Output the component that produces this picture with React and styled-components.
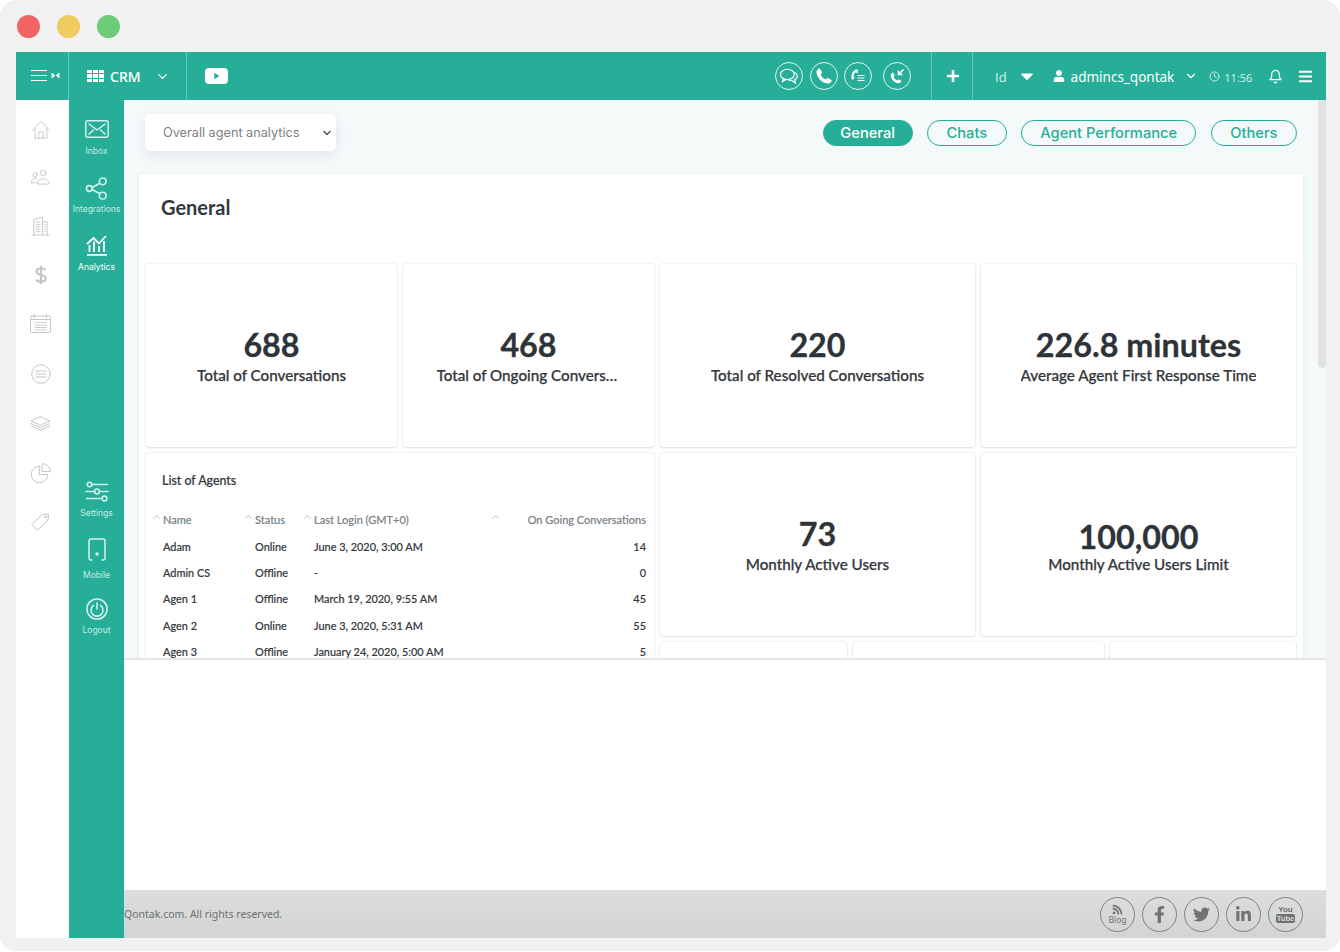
import styled, { createGlobalStyle } from 'styled-components';
import {
  FaRss,
  FaFacebookF,
  FaTwitter,
  FaLinkedinIn,
  FaUser,
  FaPlus,
  FaCaretDown,
  FaBars,
} from 'react-icons/fa';
import { FiChevronDown, FiBell, FiClock } from 'react-icons/fi';

const TEAL = '#27ae98';

const Global = createGlobalStyle`
  html, body { margin: 0; padding: 0; background: #fff; }
  * { box-sizing: border-box; }
  body { font-family: "Lato", "Liberation Sans", sans-serif; }
`;

const icon = { fill: 'none', stroke: 'currentColor', strokeLinecap: 'round', strokeLinejoin: 'round' };

const HomeIcon = () => (
  <svg width="20" height="20" viewBox="0 0 22 22" {...icon} strokeWidth="1">
    <path d="M1.500 11.500 11 1.500l9.500 10M4.500 9v11h13V9" />
    <path d="M8.500 20v-6a1 1 0 0 1 1-1h3a1 1 0 0 1 1 1v6" />
  </svg>
);
const PeopleIcon = () => (
  <svg width="21" height="16" viewBox="0 0 22 18" {...icon} strokeWidth="1">
    <circle cx="14" cy="4.500" r="3.300" />
    <path d="M7.500 16a6.500 5 0 0 1 13 0 1 1 0 0 1-1 1h-11a1 1 0 0 1-1-1Z" />
    <circle cx="5" cy="6.500" r="2.400" />
    <path d="M1 15.500c-.4-3.500 1.500-5.300 4-5.300 1 0 1.600.2 2.300.6M1 15.500h4" />
  </svg>
);
const BuildingIcon = () => (
  <svg width="19" height="20" viewBox="0 0 20 21" {...icon} strokeWidth="1">
    <path d="M3 20V4l9-3v19M12 6h5v14M1 20h18" />
    <path d="M5.500 6.500h4M5.500 9h4M5.500 11.500h4M5.500 14h4M5.500 16.500h4M14 9h1.500M14 11.500h1.500M14 14h1.500M14 16.500h1.500" strokeDasharray="1 .8" />
  </svg>
);
const DollarIcon = () => (
  <svg width="12" height="20" viewBox="0 0 13 22" {...icon} strokeWidth="2.400" strokeLinecap="butt">
    <path d="M6.500 1v20M11.500 5.500C10.500 4 8.800 3.800 6.500 3.800c-3 0-5 1.200-5 3.400 0 5 10.200 2.600 10.200 7.600 0 2.300-2.200 3.500-5.200 3.500-2.500 0-4.300-.5-5.300-2.200" />
  </svg>
);
const CalendarIcon = () => (
  <svg width="21" height="19" viewBox="0 0 21 19" {...icon} strokeWidth="1">
    <rect x=".5" y="2" width="20" height="16.500" rx="1.500" />
    <path d="M4.500 .5v3M16.500 .5v3M.5 5.500h20" />
    <path d="M5 8.500h11M5 11h11M5 13.500h11M5 16h11" strokeDasharray="1 1" />
  </svg>
);
const ListCircleIcon = () => (
  <svg width="20" height="20" viewBox="0 0 20 20" {...icon} strokeWidth="1">
    <circle cx="10" cy="10" r="9.300" />
    <path d="M5 7h10M5 10h10M5 13h10" />
  </svg>
);
const LayersIcon = () => (
  <svg width="21" height="15" viewBox="0 0 20 15" {...icon} strokeWidth="1">
    <path d="M10 .8 19.300 5 10 9.200 .7 5Z" />
    <path d="M.7 7.500 10 11.700l9.300-4.200M.7 10 10 14.200 19.300 10" />
  </svg>
);
const PieIcon = () => (
  <svg width="20" height="20" viewBox="0 0 20 20" {...icon} strokeWidth="1">
    <path d="M8.500 3.200a8.300 8.300 0 1 0 8.300 8.300H8.500Z" />
    <path d="M11.500 .7a7.800 7.800 0 0 1 7.800 7.800h-7.800Z" />
  </svg>
);
const TagIcon = () => (
  <svg width="19" height="18" viewBox="0 0 19 18" {...icon} strokeWidth="1">
    <path d="M1 11 11.500 1.500l6-.5-.5 6L6.800 17Z" />
    <circle cx="14.500" cy="4" r="1" />
  </svg>
);
const InboxIcon = () => (
  <svg width="24" height="18" viewBox="0 0 24 18" {...icon} strokeWidth="1.500">
    <rect x=".8" y=".8" width="22.400" height="16.400" rx="2" />
    <path d="M4 4l8 6 8-6M4 14l4.500-4M20 14l-4.500-4" />
  </svg>
);
const ShareIcon = () => (
  <svg width="23" height="23" viewBox="0 0 23 24" {...icon} strokeWidth="1.600">
    <circle cx="4" cy="12" r="3" />
    <circle cx="18" cy="4.500" r="3.500" />
    <circle cx="18" cy="19.500" r="3.500" />
    <path d="m7 11 8-4.500M7 13l8 4.500" />
  </svg>
);
const ChartIcon = () => (
  <svg width="22" height="21" viewBox="0 0 22 21" {...icon} strokeWidth="1.800" strokeLinecap="butt">
    <path d="M1 19.800h20M3.500 17V10M8 17V6.500M13 17v-6M18 17V6" />
    <path d="M1 9l6.500-6 5.500 5.500 7-7.500" />
  </svg>
);
const SlidersIcon = () => (
  <svg width="24" height="21" viewBox="0 0 24 20" {...icon} strokeWidth="1.500">
    <circle cx="4.500" cy="3" r="2.300" />
    <path d="M7 3h15.500M1 10h8.500M14.500 10h8.500M1.500 17h15.500" />
    <circle cx="12" cy="10" r="2.400" />
    <circle cx="19.500" cy="17" r="2.400" />
  </svg>
);
const PhoneIcon = () => (
  <svg width="18" height="24" viewBox="0 0 18 24" {...icon} strokeWidth="1.500">
    <path d="M1 20V3a2 2 0 0 1 2-2h12a2 2 0 0 1 2 2v17M1 20a2 2 0 0 0 2 2h1M17 20a2 2 0 0 1-2 2h-1" />
    <circle cx="9" cy="16" r="1" fill="currentColor" />
  </svg>
);
const PowerIcon = () => (
  <svg width="22" height="22" viewBox="0 0 24 24" {...icon} strokeWidth="1.700">
    <circle cx="12" cy="12" r="11" />
    <path d="M8.200 8a6.500 6.500 0 1 0 7.600 0M12 5.500v6.500" />
  </svg>
);
const handset = 'M7 4.500c-1.500.5-2.500 1.500-2.200 3.200.6 3.800 3.700 7 7.500 7.500 1.700.3 2.800-.8 3.200-2.200l-3-1.700-1.500 1.200c-1.500-.7-2.700-2-3.400-3.500l1.200-1.500Z';
const ChatCircleIcon = () => (
  <svg width="20" height="17" viewBox="0 0 18 16" {...icon} strokeWidth="1.100">
    <ellipse cx="7.500" cy="6" rx="6.500" ry="4.800" />
    <path d="M3.500 10 2.800 13l3.500-2.100" />
    <path d="M14.500 4.500c2 1 2.700 3 1.800 4.800-.6 1-1.300 1.500-2 1.800l1 3.300-3.700-2.600c-1.300 0-2.600-.3-3.600-1" />
  </svg>
);
const CallIcon = () => (
  <svg width="20" height="20" viewBox="3 3 14 14" fill="currentColor"><path d={handset} /></svg>
);
const CallListIcon = () => (
  <svg width="20" height="20" viewBox="0 0 20 20" fill="none" stroke="currentColor" strokeWidth="1.200">
    <path d="M8.500 3.200C5 4.500 3 8 3.500 12.500c.1 1 .8 1.500 1.500 1l1.500-1.500-1-2c.2-1.500.8-2.800 2.200-3.700L9.500 7.500 10 4Z" fill="currentColor" stroke="none" />
    <path d="M9.500 9.500h7M9.500 12h7M9.500 14.500h7" />
  </svg>
);
const CallInIcon = () => (
  <svg width="20" height="20" viewBox="0 0 20 20" fill="currentColor">
    <path d={handset} transform="translate(-1 2)" />
    <path d="M16.500 3.500 11.500 8.500M11.500 4.500v4h4" fill="none" stroke="currentColor" strokeWidth="1.600" />
  </svg>
);
const YoutubeIcon = () => (
  <svg width="23" height="16" viewBox="0 0 23 16">
    <rect width="23" height="16" rx="4" fill="#fff" />
    <path d="M9.300 4.800v6.400l5.200-3.200Z" fill={TEAL} />
  </svg>
);
const MenuCollapseIcon = () => (
  <svg width="30" height="14" viewBox="0 0 30 14" fill="none" stroke="#fff">
    <path d="M0 1.500h16M0 6.500h16M0 11.500h16" strokeWidth="1" />
    <path d="M21 4v5M28 4v5" strokeWidth="1" />
    <path d="M21.500 4.500 24 6.500 21.500 8.500ZM27.500 4.500 25 6.500 27.500 8.500Z" fill="#fff" strokeWidth=".5" />
  </svg>
);

const Frame = styled.div`
  width: 1340px;
  height: 951px;
  background: #f2f1f1;
  border-radius: 16px;
  padding: 0 14px 13px 16px;
  overflow: hidden;
  display: flex;
  flex-direction: column;
`;
const TitleBar = styled.div`
  height: 52px;
  flex: none;
  display: flex;
  align-items: center;
  gap: 17px;
  padding: 0 0 0 1px;
`;
const Light = styled.span`
  width: 23px;
  height: 23px;
  border-radius: 50%;
  background: ${(p) => p.$color};
`;
const Window = styled.div`
  flex: 1;
  min-height: 0;
  display: flex;
  flex-direction: column;
  background: #fff;
`;
const TopBar = styled.header`
  height: 48px;
  flex: none;
  background: ${TEAL};
  color: #fff;
  display: flex;
  align-items: center;
`;
const BarCell = styled.div`
  height: 100%;
  display: flex;
  align-items: center;
  width: ${(p) => p.$width}px;
  padding-left: ${(p) => p.$pad || 0}px;
  border-right: ${(p) => (p.$plain ? '0' : '1px solid rgba(255, 255, 255, 0.32)')};
`;
const CrmLabel = styled.span`
  font-family: "Noto Sans", sans-serif;
  font-size: 14px;
  font-weight: 500;
  margin: 0 14px 0 6px;
`;
const GridDots = styled.span`
  display: grid;
  grid-template-columns: repeat(3, 5px);
  grid-auto-rows: 3.500px;
  gap: 1px;
  i { background: #fff; display: block; }
`;
const BarSpacer = styled.div`
  flex: 1;
`;
const RoundIcons = styled.div`
  display: flex;
  align-items: center;
  height: 100%;
  padding-right: 20px;
  border-right: 1px solid rgba(255, 255, 255, 0.32);
`;
const RoundIcon = styled.span`
  width: 28px;
  height: 28px;
  border-radius: 50%;
  border: 1px solid rgba(255, 255, 255, 0.85);
  display: flex;
  align-items: center;
  justify-content: center;
  margin-left: ${(p) => p.$gap}px;
`;
const BarText = styled.span`
  font-family: ${(p) => (p.$light ? '"Open Sans"' : '"Noto Sans"')}, sans-serif;
  font-size: ${(p) => p.$size || 14}px;
  color: ${(p) => (p.$light ? '#d6f2ec' : '#fff')};
  margin-left: ${(p) => p.$left || 0}px;
  padding-top: 2px;
  white-space: nowrap;
`;
const BarIcon = styled.span`
  display: flex;
  margin-left: ${(p) => p.$left}px;
  color: ${(p) => p.$color || '#fff'};
`;
const UserBlock = styled.div`
  display: flex;
  align-items: center;
  height: 100%;
  padding-left: 22px;
  flex: none;
  width: 353px;
`;
const Body = styled.div`
  flex: 1;
  min-height: 0;
  display: flex;
`;
const IconRail = styled.nav`
  width: 53px;
  flex: none;
  background: #fff;
  color: #c3c5c6;
  display: flex;
  flex-direction: column;
  padding-top: 20px;
`;
const RailItem = styled.span`
  height: ${(p) => p.$height}px;
  display: flex;
  justify-content: center;
  padding-right: 4px;
`;
const SideNav = styled.nav`
  width: 55px;
  flex: none;
  background: ${TEAL};
`;
const SideNavInner = styled.div`
  height: 558px;
  padding: 20px 0 23px;
  display: flex;
  flex-direction: column;
`;
const SideItem = styled.div`
  display: flex;
  flex-direction: column;
  align-items: center;
  height: ${(p) => p.$height}px;
  color: ${(p) => (p.$active ? '#fff' : '#c4eae3')};
  font-family: "Inter", sans-serif;
  font-size: 8.500px;
  line-height: 11px;
  white-space: nowrap;
`;
const SideIconBox = styled.span`
  height: ${(p) => p.$height}px;
  display: flex;
  align-items: flex-start;
  margin-bottom: 5px;
  color: ${(p) => (p.$active ? '#fff' : '#d4f3ed')};
`;
const SideGap = styled.div`
  flex: 1;
`;
const Right = styled.div`
  flex: 1;
  min-width: 0;
  display: flex;
  flex-direction: column;
`;
const Main = styled.main`
  height: 560px;
  flex: none;
  display: flex;
  overflow: hidden;
  background: #f4f9fa;
  border-bottom: 2px solid #e4e6e6;
`;
const Content = styled.div`
  flex: 1;
  min-width: 0;
  padding: 14px 15px 0 15px;
`;
const Scrollbar = styled.div`
  width: 8px;
  flex: none;
  &::before {
    content: '';
    display: block;
    height: 268px;
    background: #e2e2e2;
    border-radius: 0 0 4px 4px;
  }
`;
const FilterRow = styled.div`
  display: flex;
  align-items: flex-start;
  justify-content: space-between;
  height: 60px;
  padding: 0 6px 0 6px;
`;
const Select = styled.div`
  width: 191px;
  height: 37px;
  background: #fff;
  border-radius: 5px;
  box-shadow: 0 4px 12px rgba(90, 110, 120, 0.12);
  display: flex;
  align-items: center;
  justify-content: space-between;
  padding: 0 3px 0 18px;
  font-family: "Inter", sans-serif;
  font-size: 12.700px;
  color: #7c8085;
  svg { color: #55595c; stroke-width: 3; }
`;
const Tabs = styled.div`
  display: flex;
  gap: 14.500px;
  padding-top: 6px;
`;
const Tab = styled.span`
  height: 26px;
  padding: 0 ${(p) => p.$pad}px;
  border-radius: 13px;
  display: flex;
  align-items: center;
  font-family: "Inter", sans-serif;
  font-size: 14.700px;
  font-weight: 500;
  border: 1px solid ${TEAL};
  background: ${(p) => (p.$active ? TEAL : 'transparent')};
  color: ${(p) => (p.$active ? '#fff' : TEAL)};
`;
const Panel = styled.section`
  background: #fff;
  box-shadow: 0 0 3px rgba(120, 130, 135, 0.14);
  padding: 0 7px;
`;
const PanelTitle = styled.h2`
  margin: 0;
  height: 90px;
  padding: 21px 0 0 15px;
  font-size: 20px;
  line-height: 24px;
  font-weight: 700;
  color: #33383d;
`;
const CardGrid = styled.div`
  display: grid;
  grid-template-columns: 251px 251px 315px 315px;
  grid-auto-rows: 183px;
  gap: 6px;
`;
const Card = styled.div`
  background: #fff;
  border-radius: 3px;
  box-shadow: 0 0 2px rgba(90, 100, 105, 0.26), 0 1px 2px rgba(90, 100, 105, 0.12);
  min-width: 0;
`;
const StatCard = styled(Card)`
  display: flex;
  flex-direction: column;
  align-items: center;
  padding-top: ${(p) => p.$top}px;
  text-align: center;
`;
const StatValue = styled.div`
  font-size: 32.300px;
  line-height: 40px;
  font-weight: 700;
  color: #2e3338;
  -webkit-text-stroke: 0.3px #2e3338;
`;
const StatLabel = styled.div`
  font-size: 15.200px;
  line-height: 20px;
  font-weight: 500;
  color: #33383d;
  -webkit-text-stroke: 0.25px #33383d;
  margin-top: ${(p) => (p.$tight ? -3 : 0)}px;
  max-width: ${(p) => (p.$wide ? 'none' : '184px')};
  overflow: hidden;
  text-overflow: ellipsis;
  white-space: nowrap;
`;
const AgentsCard = styled(Card)`
  grid-column: span 2;
  grid-row: span 2;
  padding: 20px 8px 0 16px;
`;
const AgentsTitle = styled.h3`
  margin: 0 0 17px;
  font-size: 12.400px;
  line-height: 16px;
  font-weight: 500;
  color: #33383d;
  -webkit-text-stroke: 0.2px #33383d;
`;
const AgentRow = styled.div`
  display: grid;
  grid-template-columns: 92px 59px 188px 1fr;
  height: ${(p) => (p.$head ? 27 : 26.400)}px;
  align-items: center;
  font-size: ${(p) => (p.$head ? 11 : 10.900)}px;
  font-weight: 500;
  color: ${(p) => (p.$head ? '#7a8288' : '#33383d')};
  -webkit-text-stroke: 0.15px ${(p) => (p.$head ? '#7a8288' : '#33383d')};
  white-space: nowrap;
  padding-left: 1px;
`;
const HeadCell = styled.span`
  position: relative;
  text-align: ${(p) => (p.$right ? 'right' : 'left')};
  &::before {
    content: '';
    position: absolute;
    left: -9px;
    top: 3px;
    width: 4px;
    height: 4px;
    border-left: 1px solid #cfd3d5;
    border-top: 1px solid #cfd3d5;
    transform: rotate(45deg);
  }
`;
const NumCell = styled.span`
  text-align: right;
`;
const BottomRow = styled.div`
  grid-column: span 2;
  display: grid;
  grid-template-columns: 187px 251px 186px;
  gap: 6px;
`;
const Blank = styled.div`
  flex: 1;
`;
const Footer = styled.footer`
  height: 48px;
  flex: none;
  background: linear-gradient(#dcdddd, #d2d3d4);
  display: flex;
  align-items: center;
  justify-content: space-between;
  padding: 0 23px 0 0;
`;
const Copyright = styled.span`
  font-family: "Noto Sans", sans-serif;
  font-size: 10.500px;
  color: #6e7072;
`;
const Socials = styled.div`
  display: flex;
  gap: 7px;
`;
const Social = styled.span`
  width: 35px;
  height: 35px;
  border-radius: 50%;
  border: 1px solid #7f8183;
  color: #6f7173;
  display: flex;
  flex-direction: column;
  align-items: center;
  justify-content: center;
  font-family: "Noto Sans", sans-serif;
`;
const BlogText = styled.span`
  font-size: 8.500px;
  line-height: 10px;
`;
const YouText = styled.span`
  font-family: "Liberation Sans", sans-serif;
  font-size: 8px;
  line-height: 8px;
  font-weight: 700;
`;
const TubeText = styled.span`
  font-family: "Liberation Sans", sans-serif;
  font-size: 7.500px;
  line-height: 9px;
  font-weight: 700;
  background: #6f7173;
  color: #d8d9d9;
  border-radius: 2px;
  padding: 0 1px;
`;

const lights = ['#f16464', '#f0cc5e', '#6ecb78'];
const railIcons = [
  [HomeIcon, 49],
  [PeopleIcon, 47],
  [BuildingIcon, 49],
  [DollarIcon, 49],
  [CalendarIcon, 50],
  [ListCircleIcon, 52],
  [LayersIcon, 47],
  [PieIcon, 50],
  [TagIcon, 20],
];
const agents = [
  ['Adam', 'Online', 'June 3, 2020, 3:00 AM', 14],
  ['Admin CS', 'Offline', '-', 0],
  ['Agen 1', 'Offline', 'March 19, 2020, 9:55 AM', 45],
  ['Agen 2', 'Online', 'June 3, 2020, 5:31 AM', 55],
  ['Agen 3', 'Offline', 'January 24, 2020, 5:00 AM', 5],
];

const App = () => {
  return (
    <Frame>
      <Global />
      <TitleBar>
        {lights.map((c) => (
          <Light key={c} $color={c} />
        ))}
      </TitleBar>
      <Window>
        <TopBar>
          <BarCell $width={53} $pad={15}>
            <MenuCollapseIcon />
          </BarCell>
          <BarCell $width={118} $pad={18}>
            <GridDots>
              {Array.from({ length: 9 }).map((_, i) => (
                <i key={i} />
              ))}
            </GridDots>
            <CrmLabel>CRM</CrmLabel>
            <FiChevronDown size={15} />
          </BarCell>
          <BarCell $plain $width={60} $pad={18}>
            <YoutubeIcon />
          </BarCell>
          <BarSpacer />
          <RoundIcons>
            <RoundIcon $gap={0}><ChatCircleIcon /></RoundIcon>
            <RoundIcon $gap={7}><CallIcon /></RoundIcon>
            <RoundIcon $gap={6}><CallListIcon /></RoundIcon>
            <RoundIcon $gap={11}><CallInIcon /></RoundIcon>
          </RoundIcons>
          <BarCell $width={41} $pad={14}>
            <FaPlus size={14} />
          </BarCell>
          <UserBlock>
            <BarText $light $size={13}>Id</BarText>
            <BarIcon $left={10}><FaCaretDown size={20} /></BarIcon>
            <BarIcon $left={16}><FaUser size={12} /></BarIcon>
            <BarText $left={6} $size={13.500}>admincs_qontak</BarText>
            <BarIcon $left={10}><FiChevronDown size={14} /></BarIcon>
            <BarIcon $left={11} $color="#d6f2ec"><FiClock size={11} /></BarIcon>
            <BarText $light $size={11} $left={4}>11:56</BarText>
            <BarIcon $left={16}><FiBell size={15} /></BarIcon>
            <BarIcon $left={15}><FaBars size={15} /></BarIcon>
          </UserBlock>
        </TopBar>
        <Body>
          <IconRail>
            {railIcons.map(([Icon, height], i) => (
              <RailItem key={i} $height={height}><Icon /></RailItem>
            ))}
          </IconRail>
          <SideNav>
            <SideNavInner>
              <SideItem $height={57}>
                <SideIconBox $height={21}><InboxIcon /></SideIconBox>
                Inbox
              </SideItem>
              <SideItem $height={58}>
                <SideIconBox $height={22}><ShareIcon /></SideIconBox>
                Integrations
              </SideItem>
              <SideItem $active $height={58}>
                <SideIconBox $active $height={22}><ChartIcon /></SideIconBox>
                Analytics
              </SideItem>
              <SideGap />
              <SideItem $height={57}>
                <SideIconBox $height={22}><SlidersIcon /></SideIconBox>
                Settings
              </SideItem>
              <SideItem $height={60}>
                <SideIconBox $height={27}><PhoneIcon /></SideIconBox>
                Mobile
              </SideItem>
              <SideItem $height={37}>
                <SideIconBox $height={22}><PowerIcon /></SideIconBox>
                Logout
              </SideItem>
            </SideNavInner>
          </SideNav>
          <Right>
            <Main>
              <Content>
                <FilterRow>
                  <Select>
                    Overall agent analytics
                    <FiChevronDown size={12} />
                  </Select>
                  <Tabs>
                    <Tab $active $pad={16.500}>General</Tab>
                    <Tab $pad={18.500}>Chats</Tab>
                    <Tab $pad={18}>Agent Performance</Tab>
                    <Tab $pad={18.500}>Others</Tab>
                  </Tabs>
                </FilterRow>
                <Panel>
                  <PanelTitle>General</PanelTitle>
                  <CardGrid>
                    <StatCard $top={61}>
                      <StatValue>688</StatValue>
                      <StatLabel>Total of Conversations</StatLabel>
                    </StatCard>
                    <StatCard $top={61}>
                      <StatValue>468</StatValue>
                      <StatLabel>Total of Ongoing Conversations</StatLabel>
                    </StatCard>
                    <StatCard $top={61}>
                      <StatValue>220</StatValue>
                      <StatLabel $wide>Total of Resolved Conversations</StatLabel>
                    </StatCard>
                    <StatCard $top={61}>
                      <StatValue>226.8 minutes</StatValue>
                      <StatLabel $wide>Average Agent First Response Time</StatLabel>
                    </StatCard>
                    <AgentsCard>
                      <AgentsTitle>List of Agents</AgentsTitle>
                      <AgentRow $head>
                        <HeadCell>Name</HeadCell>
                        <HeadCell>Status</HeadCell>
                        <HeadCell>Last Login (GMT+0)</HeadCell>
                        <HeadCell $right>On Going Conversations</HeadCell>
                      </AgentRow>
                      {agents.map((a) => (
                        <AgentRow key={a[0]}>
                          <span>{a[0]}</span>
                          <span>{a[1]}</span>
                          <span>{a[2]}</span>
                          <NumCell>{a[3]}</NumCell>
                        </AgentRow>
                      ))}
                    </AgentsCard>
                    <StatCard $top={61}>
                      <StatValue>73</StatValue>
                      <StatLabel $wide>Monthly Active Users</StatLabel>
                    </StatCard>
                    <StatCard $top={64}>
                      <StatValue>100,000</StatValue>
                      <StatLabel $wide $tight>Monthly Active Users Limit</StatLabel>
                    </StatCard>
                    <BottomRow>
                      <Card />
                      <Card />
                      <Card />
                    </BottomRow>
                  </CardGrid>
                </Panel>
              </Content>
              <Scrollbar />
            </Main>
            <Blank />
            <Footer>
              <Copyright>Qontak.com. All rights reserved.</Copyright>
              <Socials>
                <Social>
                  <FaRss size={11} />
                  <BlogText>Blog</BlogText>
                </Social>
                <Social><FaFacebookF size={17} /></Social>
                <Social><FaTwitter size={17} /></Social>
                <Social><FaLinkedinIn size={17} /></Social>
                <Social>
                  <YouText>You</YouText>
                  <TubeText>Tube</TubeText>
                </Social>
              </Socials>
            </Footer>
          </Right>
        </Body>
      </Window>
    </Frame>
  );
};

export default App;
